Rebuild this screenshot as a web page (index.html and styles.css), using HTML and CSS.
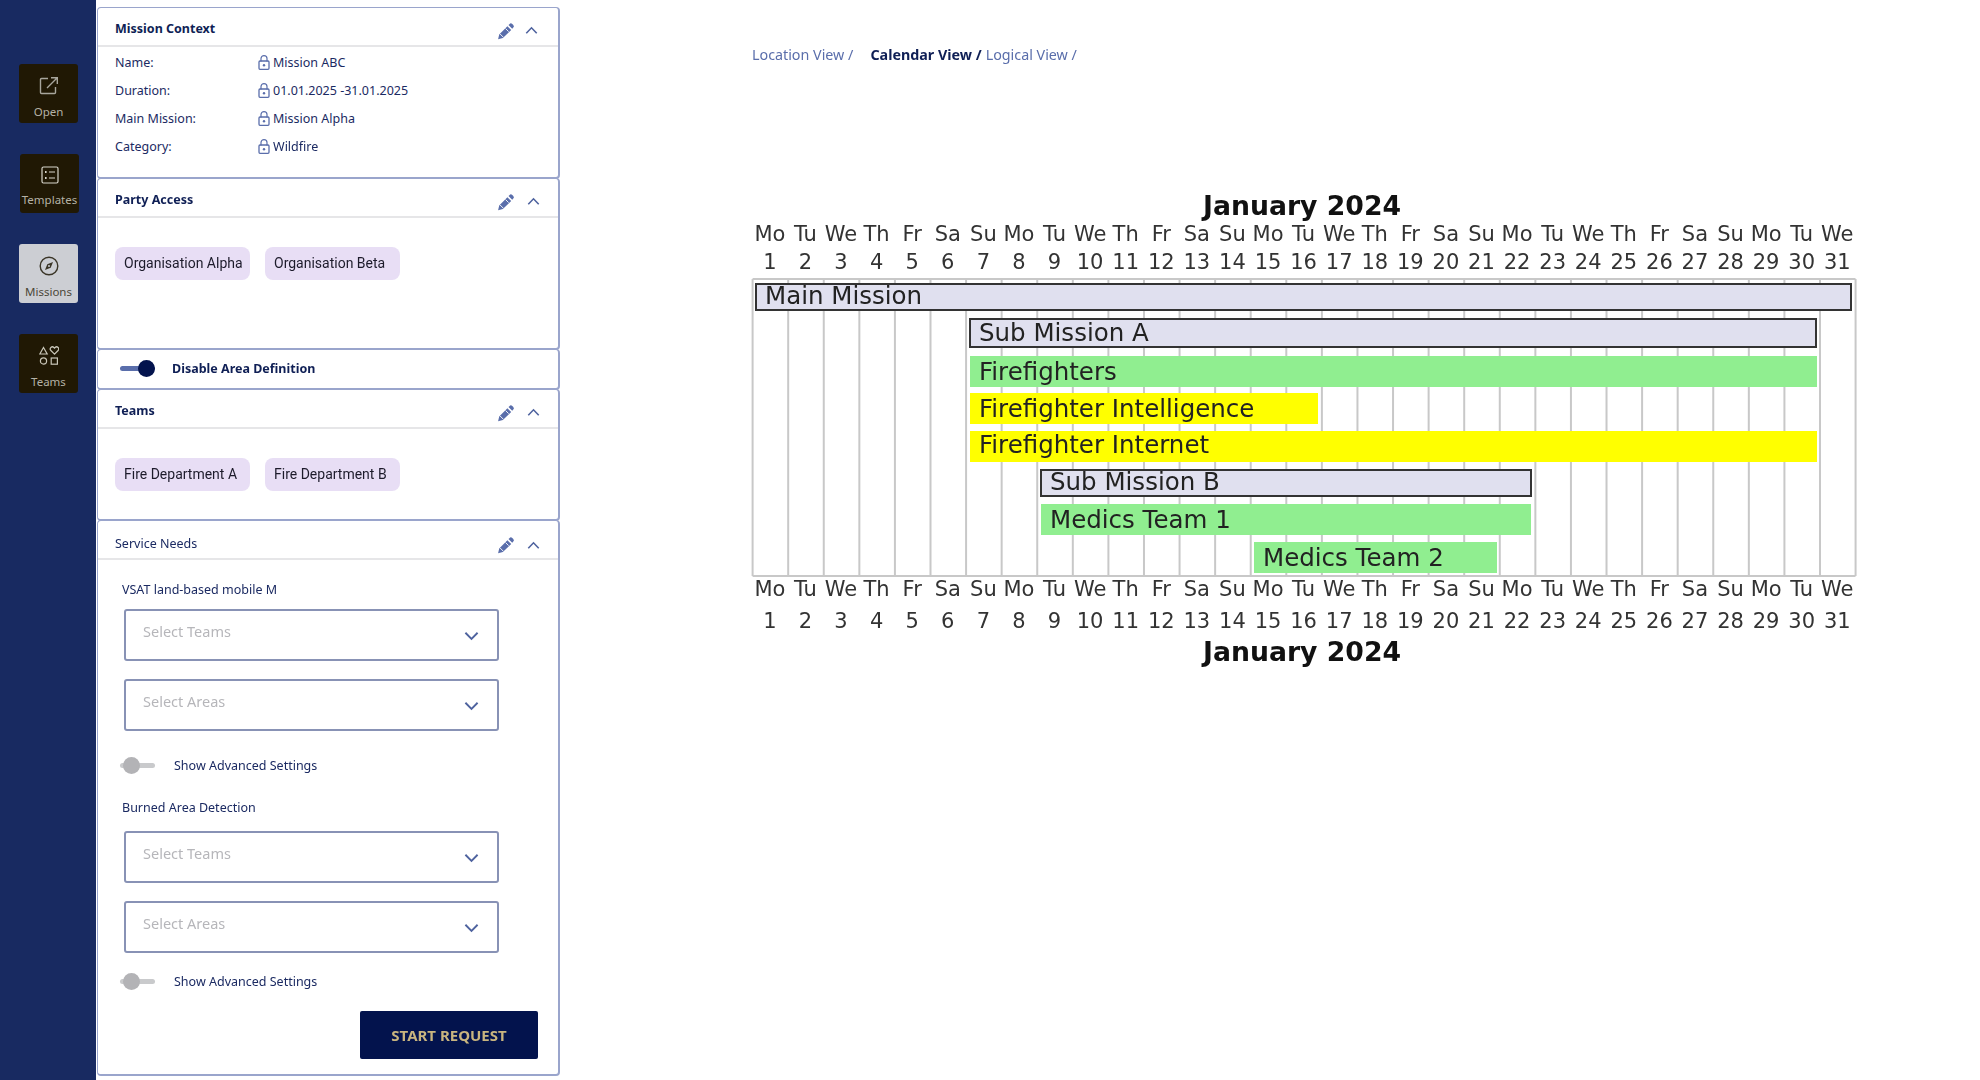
FILE: index.html
```html
<!DOCTYPE html>
<html lang="en">
<head>
  <meta charset="UTF-8" />
  <meta name="viewport" content="width=device-width, initial-scale=1.0"/>
  <title>Missions</title>
  <link rel="stylesheet" href="styles.css">
</head>
<body>
  <svg class="defs" width="0" height="0">
    <symbol id="pencil" viewBox="0 0 18 18">
      <path d="M12.4 2.2a2 2 0 0 1 2.9-.3l1 1a2 2 0 0 1-.2 2.9l-.9.9-3.7-3.6zM10.4 4.2l3.8 3.8-8.3 8.1-4.8 1.2 1.1-4.9z" fill="#5a6eab"/>
      <path d="M3 11.9l3.3 3.3M8.6 6.6l3 3" stroke="#fff" stroke-width=".9" fill="none"/>
    </symbol>
    <symbol id="lock" viewBox="0 0 12 15">
      <path d="M3 6.5V3.6a3 3 0 0 1 6 0v2.9" fill="none" stroke="#5a6eab" stroke-width="1.2"/>
      <rect x="1" y="6" width="10" height="8.3" rx="1" fill="none" stroke="#5a6eab" stroke-width="1.3"/>
      <circle cx="6" cy="10.2" r="1.2" fill="#5a6eab"/>
    </symbol>
    <symbol id="up" viewBox="0 0 14 10">
      <path d="M1.2 8L7 2l5.8 6" fill="none" stroke="#4f639f" stroke-width="1.8"/>
    </symbol>
    <symbol id="down" viewBox="0 0 16 10">
      <path d="M1.5 1.5L8 8l6.5-6.5" fill="none" stroke="#4f639f" stroke-width="2"/>
    </symbol>
  </svg>

  <nav class="sidebar">
    <a class="nav-btn">
      <svg width="20" height="20" viewBox="0 0 20 20" fill="none" stroke="#a8a69d" stroke-width="1.4"><path d="M9 2.5H2.5a1 1 0 0 0-1 1v13a1 1 0 0 0 1 1h13a1 1 0 0 0 1-1V11"/><path d="M8 12L18 2M12 1.7h6.3V8"/></svg>
      <span>Open</span>
    </a>
    <a class="nav-btn nav-shift">
      <svg width="18" height="18" viewBox="0 0 18 18" fill="none" stroke="#d8d6cc" stroke-width="1.2"><rect x="1" y="1" width="16" height="16" rx="1.5"/><path d="M8 6h6M8 12h6"/><path d="M4 6h1.6M4 12h1.6" stroke-width="2"/></svg>
      <span>Templates</span>
    </a>
    <a class="nav-btn active">
      <svg width="20" height="20" viewBox="0 0 20 20" fill="none" stroke="#3a3527" stroke-width="1.4"><circle cx="10" cy="10" r="8.8"/><path d="M14 6l-2.3 5.7L6 14l2.3-5.7z" fill="#3a3527" stroke="none"/><circle cx="10" cy="10" r="1" fill="#ccced3" stroke="none"/></svg>
      <span>Missions</span>
    </a>
    <a class="nav-btn">
      <svg width="20" height="20" viewBox="0 0 20 20" fill="none" stroke="#c9c6b8" stroke-width="1.2"><path d="M4.5 1.5L8.2 8H.8z"/><path d="M15.5 8.2l-3.6-3.7a2.1 2.1 0 0 1 3-3l.6.6.6-.6a2.1 2.1 0 0 1 3 3z"/><circle cx="4.5" cy="15" r="3.1"/><rect x="12.2" y="12" width="6.2" height="6.2"/></svg>
      <span>Teams</span>
    </a>
  </nav>

  <aside class="panel">
    <section class="card card-context">
      <header class="card-head">
        <h3>Mission Context</h3>
        <svg class="ic-pencil"><use href="#pencil"/></svg>
        <svg class="ic-up up-first"><use href="#up"/></svg>
      </header>
      <dl class="facts">
        <dt>Name:</dt><dd><svg class="ic-lock"><use href="#lock"/></svg>Mission ABC</dd>
        <dt>Duration:</dt><dd><svg class="ic-lock"><use href="#lock"/></svg>01.01.2025 -31.01.2025</dd>
        <dt>Main Mission:</dt><dd><svg class="ic-lock"><use href="#lock"/></svg>Mission Alpha</dd>
        <dt>Category:</dt><dd><svg class="ic-lock"><use href="#lock"/></svg>Wildfire</dd>
      </dl>
    </section>

    <section class="card card-party">
      <header class="card-head">
        <h3>Party Access</h3>
        <svg class="ic-pencil"><use href="#pencil"/></svg>
        <svg class="ic-up"><use href="#up"/></svg>
      </header>
      <div class="chips">
        <span class="chip">Organisation Alpha</span>
        <span class="chip">Organisation Beta</span>
      </div>
    </section>

    <section class="card card-toggle">
      <span class="toggle on"></span>
      <strong>Disable Area Definition</strong>
    </section>

    <section class="card card-teams">
      <header class="card-head">
        <h3>Teams</h3>
        <svg class="ic-pencil"><use href="#pencil"/></svg>
        <svg class="ic-up"><use href="#up"/></svg>
      </header>
      <div class="chips">
        <span class="chip">Fire Department A</span>
        <span class="chip">Fire Department B</span>
      </div>
    </section>

    <section class="card card-service">
      <header class="card-head">
        <h3 class="plain">Service Needs</h3>
        <svg class="ic-pencil"><use href="#pencil"/></svg>
        <svg class="ic-up"><use href="#up"/></svg>
      </header>
      <div class="service-body">
        <p class="service-name">VSAT land-based mobile M</p>
        <div class="select"><span>Select Teams</span><svg class="ic-down"><use href="#down"/></svg></div>
        <div class="select"><span>Select Areas</span><svg class="ic-down"><use href="#down"/></svg></div>
        <label class="adv"><span class="toggle"></span>Show Advanced Settings</label>

        <p class="service-name second">Burned Area Detection</p>
        <div class="select"><span>Select Teams</span><svg class="ic-down"><use href="#down"/></svg></div>
        <div class="select"><span>Select Areas</span><svg class="ic-down"><use href="#down"/></svg></div>
        <label class="adv adv-last"><span class="toggle"></span>Show Advanced Settings</label>

        <button class="start">START REQUEST</button>
      </div>
    </section>
  </aside>

  <main class="content">
    <div class="crumbs">
      <a>Location View /</a>
      <a class="current">Calendar View /</a>
      <a>Logical View /</a>
    </div>
    <div id="chart"></div>
  </main>

  <script src="chart.js"></script>
</body>
</html>
```

FILE: styles.css
```css
* {
  box-sizing: border-box;
}
html, body {
  height: 100%;
}
body {
  margin: 0;
  display: flex;
  background: #fff;
  font-family: "Noto Sans", Arial, sans-serif;
  color: #1b2a62;
  overflow: hidden;
}
.defs {
  position: absolute;
}

.sidebar {
  width: 96px;
  flex: none;
  background: #182a61;
  padding: 64px 0 0 19px;
  display: flex;
  flex-direction: column;
  gap: 31px;
}
.nav-btn {
  width: 59px;
  height: 59px;
  background: #201804;
  border-radius: 3px;
  color: #b5b2a6;
  font-size: 11.5px;
  display: flex;
  flex-direction: column;
  align-items: center;
  padding-top: 12px;
}
.nav-btn span {
  margin-top: 8px;
  line-height: 15px;
}
.nav-shift {
  margin-left: 1px;
}
.nav-btn.active {
  background: #ccced3;
  color: #4a4637;
}

.panel {
  width: 463px;
  flex: none;
  margin-left: 1px;
  padding-top: 7px;
  display: flex;
  flex-direction: column;
  filter: blur(0.3px);
}
.card {
  border: 2px solid #9aa5cc;
  border-left-width: 1px;
  border-top-width: 1px;
  border-radius: 4px;
  background: #fff;
  margin-top: -1px;
}
.card-context { height: 172px; margin-top: 0; }
.card-party { height: 172px; }
.card-toggle { height: 41px; display: flex; align-items: center; padding: 0 0 2px 22px; }
.card-teams { height: 132px; }
.card-service { height: 556px; }
.card-head {
  height: 39px;
  border-bottom: 2px solid #e6e6e8;
  display: flex;
  align-items: center;
  padding: 0 18px 0 17px;
}
.card-head h3 {
  margin: 4px auto 0 0;
  font-size: 12.5px;
  font-weight: 700;
  color: #0f1f55;
}
.card-head h3.plain {
  margin-top: 8px;
  font-weight: 400;
  color: #1b2a62;
}
.ic-pencil {
  width: 18px;
  height: 18px;
  margin-top: 8px;
}
.ic-up {
  width: 13px;
  height: 9px;
  margin: 8px 0 0 12px;
}
.card-service .ic-pencil,
.card-service .ic-up {
  margin-top: 11px;
}
.up-first {
  margin-left: 10px;
  margin-right: 2px;
}
.facts {
  margin: 0;
  padding: 1px 0 0 17px;
  display: grid;
  grid-template-columns: 143px 1fr;
  grid-auto-rows: 28.2px;
  align-items: center;
  font-size: 12.5px;
}
.facts dd {
  margin: 0;
  display: flex;
  align-items: center;
}
.ic-lock {
  width: 12px;
  height: 15px;
  margin-right: 3px;
}
.chips {
  display: flex;
  gap: 15px;
  padding: 29px 0 0 17px;
}
.chip {
  width: 135px;
  height: 33px;
  background: #e8def5;
  border-radius: 8px;
  padding-left: 9px;
  font-family: Roboto, Arial, sans-serif;
  font-size: 14px;
  line-height: 33px;
  color: #1d1b2b;
}
.toggle {
  position: relative;
  display: block;
  flex: none;
  width: 35px;
  height: 5px;
  border-radius: 3px;
  background: #c9cacc;
}
.toggle::after {
  content: "";
  position: absolute;
  left: 3px;
  top: -6px;
  width: 17px;
  height: 17px;
  border-radius: 50%;
  background: #b3b3b6;
}
.toggle.on {
  background: #5a6eab;
}
.toggle.on::after {
  left: 18px;
  background: #03134d;
}
.card-toggle strong {
  margin-left: 17px;
  font-size: 12.5px;
  color: #0f1f55;
}

.service-body {
  padding: 0 20px 0 24px;
}
.service-name {
  margin: 0;
  padding-top: 21px;
  font-size: 12.5px;
  line-height: 18px;
}
.service-name.second {
  padding-top: 22px;
}
.select {
  width: 375px;
  height: 52px;
  margin: 10px 0 18px 2px;
  border: 2px solid #8892b5;
  border-radius: 3px;
  padding: 0 18px 9px 17px;
  display: flex;
  justify-content: space-between;
  align-items: center;
  font-size: 14.5px;
  color: #b6b6ba;
}
.select + .select {
  margin-top: 0;
}
.second + .select {
  margin-top: 14px;
}
.ic-down {
  width: 15px;
  height: 10px;
  margin-top: 11px;
}
.adv {
  display: flex;
  align-items: center;
  gap: 19px;
  margin: 22px 0 0 -2px;
  height: 24px;
  font-size: 12.5px;
}
.adv-last {
  margin-top: -2px;
}
.start {
  display: block;
  width: 178px;
  height: 48px;
  margin: 18px 0 0 auto;
  border: 0;
  border-radius: 2px;
  background: #03134d;
  color: #c9b57f;
  font-family: "Noto Sans", Arial, sans-serif;
  font-size: 15px;
  font-weight: 700;
}

.content {
  flex: 1;
  min-width: 0;
  padding: 44px 0 0 192px;
}
.crumbs {
  display: flex;
  font-size: 14.3px;
  line-height: 22px;
  color: #5a6eab;
  filter: blur(0.3px);
}
.crumbs a:first-child {
  margin-right: 17px;
}
.crumbs a.current {
  margin-right: 4px;
  font-weight: 700;
  color: #0f1f55;
}
#chart {
  margin: 124px 0 0 -4px;
  filter: blur(0.7px);
}
#chart svg {
  display: block;
}
#chart text {
  font-family: "DejaVu Sans", sans-serif;
  fill: #222;
}
#chart .day {
  font-size: 21px;
  text-anchor: middle;
  fill: #333;
}
#chart .month {
  font-size: 26.7px;
  font-weight: 700;
  text-anchor: middle;
  fill: #111;
}
#chart .bar-label {
  font-size: 24.5px;
}
```

FILE: chart.js
```js
// gantt for january, drawn into #chart
var SVG = 'http://www.w3.org/2000/svg';
var dayW = 35.58;
var days = ['Mo', 'Tu', 'We', 'Th', 'Fr', 'Sa', 'Su'];

// ty = text baseline below the top of the bar
var bars = [
  { name: 'Main Mission', x: 756, y: 284, w: 1095, h: 26, ty: 20, group: true },
  { name: 'Sub Mission A', x: 970, y: 319, w: 846, h: 28, ty: 22, group: true },
  { name: 'Firefighters', x: 970, y: 356, w: 847, h: 31, ty: 24, fill: '#90ee90' },
  { name: 'Firefighter Intelligence', x: 970, y: 393, w: 348, h: 31, ty: 24, fill: '#ffff00' },
  { name: 'Firefighter Internet', x: 970, y: 431, w: 847, h: 31, ty: 22, fill: '#ffff00' },
  { name: 'Sub Mission B', x: 1041, y: 470, w: 490, h: 26, ty: 20, group: true },
  { name: 'Medics Team 1', x: 1041, y: 504, w: 490, h: 31, ty: 24, fill: '#90ee90' },
  { name: 'Medics Team 2', x: 1254, y: 542, w: 243, h: 31, ty: 24, fill: '#90ee90' }
];

// the svg starts at page x 748, y 190
var ox = 748, oy = 190;
var svg = document.createElementNS(SVG, 'svg');
svg.setAttribute('width', 1120);
svg.setAttribute('height', 480);

function el(tag, attrs, text) {
  var e = document.createElementNS(SVG, tag);
  for (var k in attrs) e.setAttribute(k, attrs[k]);
  if (text) e.textContent = text;
  svg.appendChild(e);
  return e;
}

function month(y) {
  el('text', { x: 1302 - ox, y: y - oy, 'class': 'month' }, 'January 2024');
}

month(215);
month(661);

for (var i = 0; i < 31; i++) {
  var cx = 752.6 + dayW * (i + 0.5) - ox - 0.5;
  el('text', { x: cx, y: 241 - oy, 'class': 'day' }, days[i % 7]);
  el('text', { x: cx, y: 269 - oy, 'class': 'day' }, String(i + 1));
  el('text', { x: cx, y: 596 - oy, 'class': 'day' }, days[i % 7]);
  el('text', { x: cx, y: 628 - oy, 'class': 'day' }, String(i + 1));
}

for (var j = 0; j <= 31; j++) {
  var lx = 752.6 + dayW * j - ox;
  el('line', { x1: lx, x2: lx, y1: 279 - oy, y2: 576 - oy, stroke: '#c8c8c8', 'stroke-width': 2 });
}
el('line', { x1: 752.6 - ox, x2: 1855.5 - ox, y1: 279 - oy, y2: 279 - oy, stroke: '#c8c8c8', 'stroke-width': 2 });
el('line', { x1: 752.6 - ox, x2: 1855.5 - ox, y1: 576 - oy, y2: 576 - oy, stroke: '#c8c8c8', 'stroke-width': 2 });

bars.forEach(function (b) {
  var attrs = { x: b.x - ox, y: b.y - oy, width: b.w, height: b.h, fill: b.fill || '#e0e0ef' };
  if (b.group) {
    attrs.stroke = '#333';
    attrs['stroke-width'] = 2;
  }
  el('rect', attrs);
  el('text', { x: b.x - ox + 9, y: b.y - oy + b.ty, 'class': 'bar-label' }, b.name);
});

document.getElementById('chart').appendChild(svg);
```
